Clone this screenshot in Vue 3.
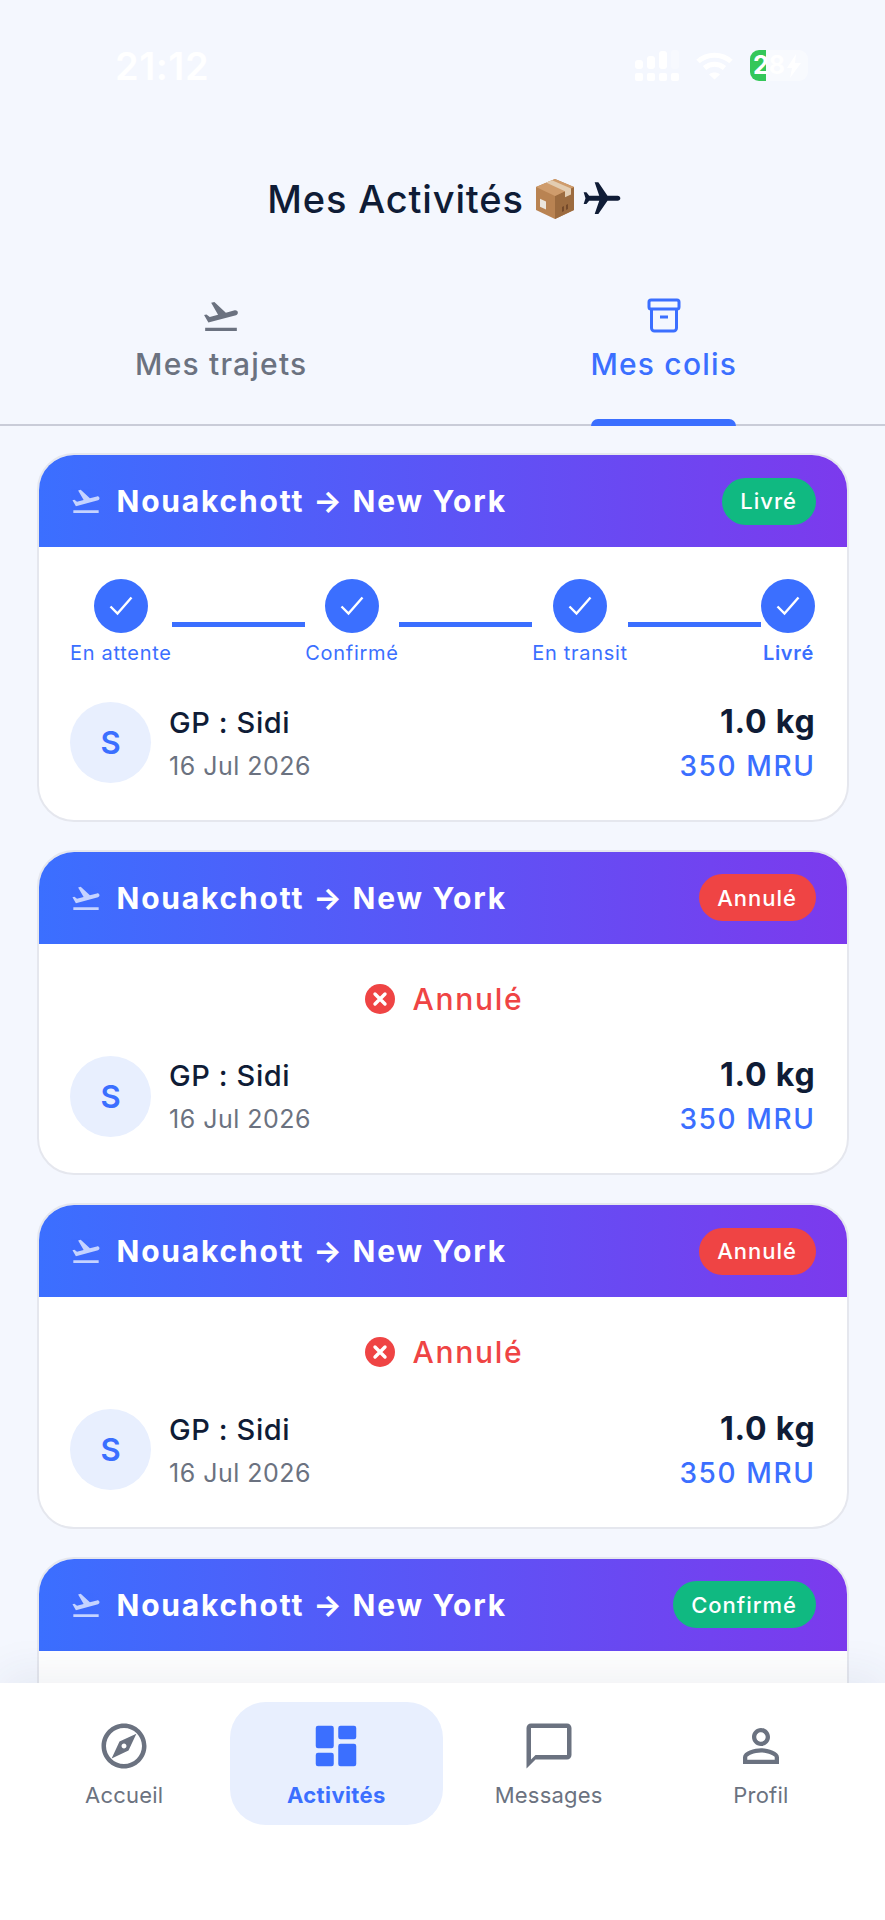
<script setup>
const planePath = 'M2.5 19h19v2h-19v-2zm19.57-9.36c-.21-.8-1.04-1.28-1.84-1.06L14.92 10l-6.9-6.43-1.93.51 4.14 7.17-4.97 1.33-1.97-1.54-1.45.39 2.59 4.49L21 11.49c.81-.23 1.28-1.05 1.07-1.85z'

const steps = ['En attente', 'Confirmé', 'En transit', 'Livré']

// la 4e carte passe sous la barre du bas : seul son en-tête est visible
const cards = [
  { id: 1, status: 'Livré', tone: 'green', tracked: true },
  { id: 2, status: 'Annulé', tone: 'red', tracked: false },
  { id: 3, status: 'Annulé', tone: 'red', tracked: false },
  { id: 4, status: 'Confirmé', tone: 'green', clipped: true },
]

const navItems = [
  { label: 'Accueil', icon: 'compass' },
  { label: 'Activités', icon: 'grid', active: true },
  { label: 'Messages', icon: 'chat' },
  { label: 'Profil', icon: 'person' },
]
</script>

<template>
  <div class="screen">
    <header class="top">
      <div class="statusbar">
        <span class="clock">21:12</span>
        <div class="status-icons">
          <svg class="signal" width="44" height="31" viewBox="0 0 44 31" fill="#fff">
            <rect x="0" y="10" width="8" height="9" rx="3" />
            <rect x="12" y="6" width="8" height="13" rx="3" />
            <rect x="24" y="1" width="8" height="18" rx="3" />
            <rect x="36" y="0" width="8" height="19" rx="3" opacity=".3" />
            <rect x="0" y="23" width="8" height="8" rx="2" />
            <rect x="12" y="23" width="8" height="8" rx="2" />
            <rect x="24" y="23" width="8" height="8" rx="2" />
            <rect x="36" y="23" width="8" height="8" rx="2" />
          </svg>
          <svg class="wifi" width="37" height="29" viewBox="0 0 37 29" fill="none" stroke="#fff" stroke-width="5">
            <path d="M2 10.5C11 2 26 2 35 10.5" />
            <path d="M8.5 17c6-5 14-5 20 0" />
            <path d="M13 23.5l5.5 5 5.5-5c-3-2.6-8-2.6-11 0z" fill="#fff" stroke="none" />
          </svg>
          <div class="battery">
            <span class="battery-fill"></span>
            <span class="battery-text">28</span>
            <svg class="bolt" width="14" height="24" viewBox="0 0 14 24" fill="#fff">
              <path d="M9 0L0 14h5l-2 10 11-15H8z" />
            </svg>
          </div>
        </div>
      </div>

      <h1 class="title">
        <span>Mes Activités</span>
        <svg class="box" width="38" height="40" viewBox="0 0 38 40">
          <path d="M19 0L38 8v23L19 40 0 31V8z" fill="#b98352" />
          <path d="M19 17L38 8v23L19 40z" fill="#9c6b3f" />
          <path d="M19 0L38 8 19 17 0 8z" fill="#cf9c6c" />
          <path d="M10 3.6l19 8.6v6l6-2.8v-6L16 1.2z" fill="#e3cdb2" />
          <rect x="4" y="18" width="6" height="8" fill="#ece6dd" transform="skewY(24)" />
          <path d="M26 28l2-1v5l-2 1zM30 26l2-1v5l-2 1z" fill="#74492a" />
        </svg>
        <svg class="jet" width="44" height="40" viewBox="0 0 24 24" preserveAspectRatio="none" fill="#0f1c36">
          <path transform="rotate(90 12 12)" d="M21 16v-2l-8-5V3.5c0-.83-.67-1.5-1.5-1.5S10 2.67 10 3.5V9l-8 5v2l8-2.5V19l-2 1.5V22l3.5-1 3.5 1v-1.5L13 19v-5.5l8 2.5z" />
        </svg>
      </h1>

      <div class="tabs">
        <div class="tab">
          <svg width="40" height="40" viewBox="0 0 24 24" fill="currentColor">
            <path :d="planePath" />
          </svg>
          <span>Mes trajets</span>
        </div>
        <div class="tab tab--active">
          <svg width="40" height="40" viewBox="0 0 40 40" fill="none" stroke="currentColor" stroke-width="3" stroke-linejoin="round">
            <rect x="5" y="4" width="30" height="9" rx="2" />
            <path d="M7.5 13v19a3 3 0 0 0 3 3h19a3 3 0 0 0 3-3V13" />
            <path d="M16 21h8" />
          </svg>
          <span>Mes colis</span>
        </div>
      </div>
    </header>

    <main class="list">
      <article v-for="card in cards" :key="card.id" class="card">
        <div class="card-head">
          <svg class="head-plane" width="32" height="32" viewBox="0 0 24 24" fill="#fff">
            <path :d="planePath" />
          </svg>
          <span class="route">Nouakchott → New York</span>
          <span class="badge" :class="'badge--' + card.tone">{{ card.status }}</span>
        </div>

        <div class="card-body">
          <template v-if="!card.clipped">
            <div v-if="card.tracked" class="stepper">
              <template v-for="(step, i) in steps" :key="step">
                <div class="step" :class="{ 'step--last': i === steps.length - 1 }">
                  <span class="dot">
                    <svg width="24" height="20" viewBox="0 0 24 20" fill="none" stroke="#fff" stroke-width="2.4">
                      <path d="M1.5 10.5l7 7L22.5 1.5" />
                    </svg>
                  </span>
                  <span class="step-label">{{ step }}</span>
                </div>
                <span v-if="i < steps.length - 1" class="connector"></span>
              </template>
            </div>

            <div v-else class="cancelled">
              <svg width="30" height="30" viewBox="0 0 30 30">
                <circle cx="15" cy="15" r="15" fill="#ef4444" />
                <path d="M10 10l10 10M20 10L10 20" stroke="#fff" stroke-width="3.4" stroke-linecap="round" />
              </svg>
              <span>Annulé</span>
            </div>

            <div class="info">
              <span class="avatar">S</span>
              <div class="who">
                <span class="name">GP : Sidi</span>
                <span class="date">16 Jul 2026</span>
              </div>
              <div class="amounts">
                <span class="weight">1.0 kg</span>
                <span class="price">350 MRU</span>
              </div>
            </div>
          </template>
        </div>
      </article>
    </main>

    <nav class="nav">
      <div v-for="item in navItems" :key="item.label" class="nav-item" :class="{ 'nav-item--active': item.active }">
        <svg width="54" height="54" viewBox="0 0 24 24" fill="currentColor">
          <path v-if="item.icon === 'compass'" d="M12 2C6.48 2 2 6.48 2 12s4.48 10 10 10 10-4.48 10-10S17.52 2 12 2zm0 18c-4.41 0-8-3.59-8-8s3.59-8 8-8 8 3.59 8 8-3.59 8-8 8zm-5.5-2.5l7.51-3.49L17.5 6.5 9.99 9.99 6.5 17.5zm5.5-6.6c.61 0 1.1.49 1.1 1.1s-.49 1.1-1.1 1.1-1.1-.49-1.1-1.1.49-1.1 1.1-1.1z" />
          <g v-else-if="item.icon === 'grid'">
            <rect x="3" y="3" width="8" height="10" rx="1" />
            <rect x="3" y="15" width="8" height="6" rx="1" />
            <rect x="13" y="11" width="8" height="10" rx="1" />
            <rect x="13" y="3" width="8" height="6" rx="1" />
          </g>
          <path v-else-if="item.icon === 'chat'" d="M20 2H4c-1.1 0-2 .9-2 2v18l4-4h14c1.1 0 2-.9 2-2V4c0-1.1-.9-2-2-2zm0 14H6l-2 2V4h16v12z" />
          <path v-else d="M12 5.9c1.16 0 2.1.94 2.1 2.1s-.94 2.1-2.1 2.1S9.9 9.16 9.9 8s.94-2.1 2.1-2.1m0 9c2.97 0 6.1 1.46 6.1 2.1v1.1H5.9V17c0-.64 3.13-2.1 6.1-2.1M12 4C9.79 4 8 5.79 8 8s1.79 4 4 4 4-1.79 4-4-1.79-4-4-4zm0 9c-2.67 0-8 1.34-8 4v3h16v-3c0-2.66-5.33-4-8-4z" />
        </svg>
        <span>{{ item.label }}</span>
      </div>
    </nav>
  </div>
</template>

<style>
html,
body {
  margin: 0;
  background: #f4f7fe;
}
</style>

<style scoped>
.screen {
  width: 885px;
  height: 1920px;
  display: flex;
  flex-direction: column;
  overflow: hidden;
  background: #f4f7fe;
  font-family: Inter, 'Liberation Sans', sans-serif;
  color: #0f1c36;
}

.statusbar {
  height: 31px;
  padding: 50px 77px 0 115px;
  display: flex;
  align-items: center;
  justify-content: space-between;
}
.clock {
  color: #fff;
  font-size: 38px;
  font-weight: 600;
  letter-spacing: 0.5px;
}
.status-icons {
  display: flex;
  align-items: center;
  gap: 17px;
}
.battery {
  position: relative;
  width: 58px;
  height: 31px;
  border-radius: 9px;
  background: rgba(255, 255, 255, 0.4);
  display: flex;
  align-items: center;
  overflow: hidden;
}
.battery-fill {
  position: absolute;
  left: 0;
  top: 0;
  bottom: 0;
  width: 16px;
  background: #34c759;
}
.battery-text {
  position: relative;
  margin-left: 3px;
  color: #fff;
  font-size: 25px;
  font-weight: 700;
  line-height: 1;
}
.bolt {
  position: relative;
  margin-left: 2px;
}

.title {
  margin: 94px 0 0;
  padding-left: 6px;
  display: flex;
  align-items: center;
  justify-content: center;
  font-size: 38px;
  font-weight: 550;
  line-height: 48px;
  letter-spacing: 0.85px;
}
.box {
  margin-left: 12px;
}
.jet {
  margin-left: 6px;
}

.tabs {
  margin-top: 73px;
  display: flex;
  border-bottom: 2px solid #c9ccd8;
}
.tab {
  position: relative;
  flex: 1;
  height: 128px;
  display: flex;
  flex-direction: column;
  align-items: center;
  gap: 8px;
  color: #6b7280;
  font-size: 30px;
  font-weight: 500;
  line-height: 40px;
  letter-spacing: 1.2px;
}
.tab--active {
  color: #3b6fff;
}
.tab--active::after {
  content: '';
  position: absolute;
  left: 50%;
  bottom: -2px;
  width: 145px;
  height: 7px;
  margin-left: -72.5px;
  border-radius: 7px 7px 0 0;
  background: #3b6fff;
}

.list {
  flex: 1;
  min-height: 0;
  overflow: hidden;
  padding: 27px 36.5px 0;
  display: flex;
  flex-direction: column;
  gap: 28px;
}
.card {
  flex-shrink: 0;
  border: 2px solid #e5e7ee;
  border-radius: 37px;
  overflow: hidden;
  background: #fff;
}
.card-head {
  height: 92px;
  padding: 0 31px;
  display: flex;
  align-items: center;
  background: linear-gradient(90deg, #3b6fff, #7c3aed);
  color: #fff;
}
.head-plane {
  opacity: 0.7;
  margin-right: 15px;
  flex-shrink: 0;
}
.route {
  flex: 1;
  font-size: 30px;
  font-weight: 650;
  letter-spacing: 1.8px;
}
.badge {
  height: 47px;
  padding: 0 18.5px;
  border-radius: 24px;
  display: flex;
  align-items: center;
  font-size: 22px;
  font-weight: 500;
  letter-spacing: 1px;
}
.badge--green {
  background: #10b981;
}
.badge--red {
  background: #ef4444;
}

.card-body {
  padding: 32px 31px 36.5px 31.5px;
}
.stepper {
  display: flex;
  align-items: flex-start;
}
.step {
  display: flex;
  flex-direction: column;
  align-items: center;
  gap: 8px;
}
.dot {
  width: 54px;
  height: 54px;
  border-radius: 50%;
  background: #3b6fff;
  display: flex;
  align-items: center;
  justify-content: center;
}
.step-label {
  color: #3b6fff;
  font-size: 20px;
  line-height: 24px;
  letter-spacing: 0.7px;
  white-space: nowrap;
}
.step--last .step-label {
  font-weight: 600;
}
.connector {
  flex: 1;
  height: 5px;
  margin-top: 43px;
  background: #3b6fff;
}

.cancelled {
  height: 50px;
  margin-top: -2px;
  padding-left: 2.4px;
  display: flex;
  align-items: center;
  justify-content: center;
  gap: 18px;
  color: #ef4444;
  font-size: 30px;
  font-weight: 500;
  letter-spacing: 1.7px;
}

.info {
  margin-top: 37px;
  display: flex;
  align-items: center;
}
.cancelled + .info {
  margin-top: 32px;
}
.avatar {
  width: 81px;
  height: 81px;
  border-radius: 50%;
  background: #e8effe;
  color: #3b6fff;
  display: flex;
  align-items: center;
  justify-content: center;
  font-size: 31px;
  font-weight: 600;
}
.who {
  flex: 1;
  margin: 2px 0 0 18px;
  display: flex;
  flex-direction: column;
  gap: 10px;
}
.name {
  font-size: 29px;
  font-weight: 500;
  line-height: 34px;
  letter-spacing: 0.6px;
}
.date {
  color: #6b7280;
  font-size: 25px;
  line-height: 32px;
  letter-spacing: 0.5px;
}
.amounts {
  margin-top: 2px;
  display: flex;
  flex-direction: column;
  align-items: flex-end;
  gap: 10px;
}
.weight {
  font-size: 32px;
  font-weight: 700;
  line-height: 34px;
  letter-spacing: 0.8px;
}
.price {
  color: #3b6fff;
  font-size: 28px;
  font-weight: 500;
  line-height: 34px;
  letter-spacing: 1.6px;
}

.nav {
  position: relative;
  flex-shrink: 0;
  height: 218px;
  padding: 19px 18px 0;
  display: flex;
  align-items: flex-start;
  background: #fff;
  box-shadow: 0 -10px 40px rgba(40, 50, 100, 0.07);
}
.nav-item {
  flex: 1;
  height: 123px;
  border-radius: 36px;
  display: flex;
  flex-direction: column;
  align-items: center;
  padding-top: 17px;
  box-sizing: border-box;
  color: #6b7280;
  font-size: 22px;
  line-height: 28px;
  letter-spacing: 0.2px;
}
.nav-item span {
  margin-top: 8px;
}
.nav-item--active {
  background: #e8effe;
  color: #3b6fff;
  font-weight: 700;
  letter-spacing: 0.4px;
}
</style>
